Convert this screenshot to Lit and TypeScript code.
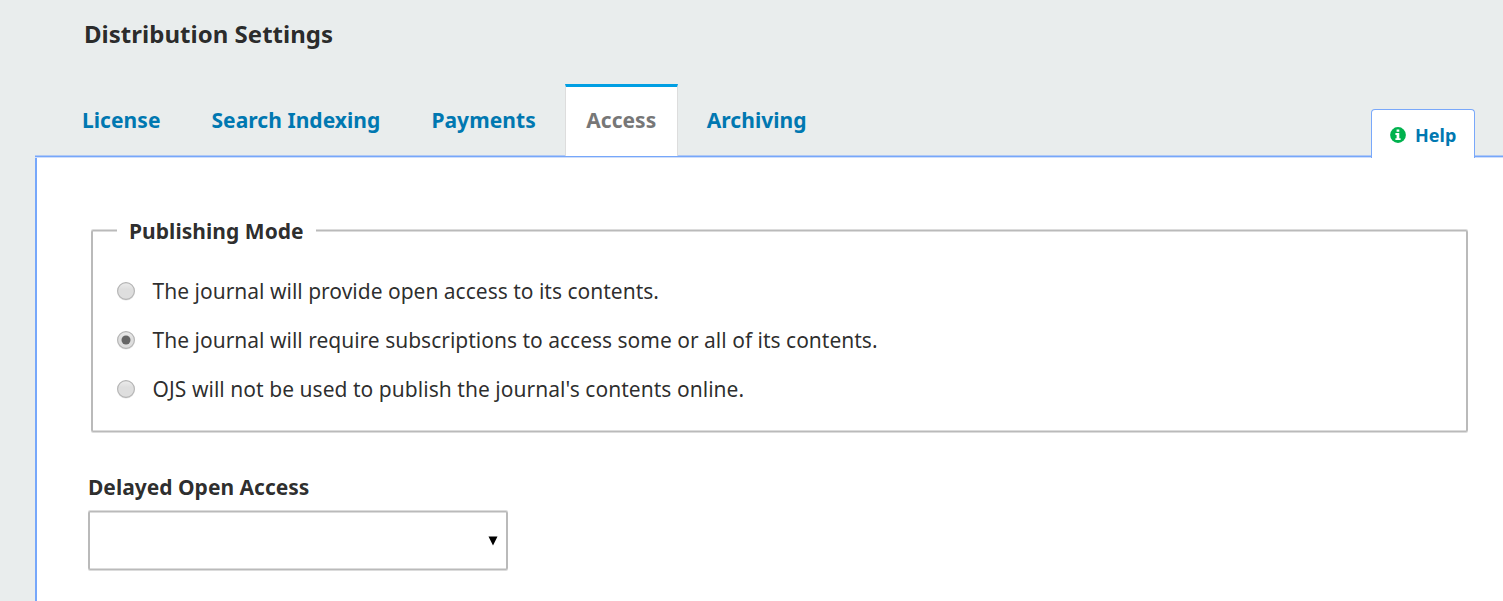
import { LitElement, html, css, svg } from "lit";
import { customElement, state } from "lit/decorators.js";
import { classMap } from "lit/directives/class-map.js";

@customElement("radio-option")
class RadioOption extends LitElement {
  static properties = { checked: { type: Boolean } };
  declare checked: boolean;
  static styles = css`
    :host { display: flex; align-items: center; height: 49px; cursor: pointer; }
    :host(:last-child) { letter-spacing: 0.04px; }
    .dot { flex: none; width: 20px; height: 20px; margin: 1px 16.6px 0 23px; }
    .text { font-size: 21px; line-height: 30px; color: rgba(0, 0, 0, 0.84); white-space: nowrap; }
  `;
  render() {
    return html`
      <svg class="dot" viewBox="0 0 20 20" role="radio" aria-checked=${this.checked ? "true" : "false"}>
        <defs>
          <linearGradient id="face" x1="0" y1="0" x2="0" y2="1">
            <stop offset="0" stop-color="#ececec" />
            <stop offset="0.4" stop-color="#dedede" />
            <stop offset="1" stop-color="#dedede" />
          </linearGradient>
        </defs>
        <circle cx="10" cy="10.6" r="9" fill="#000" opacity="0.1" />
        <circle cx="10" cy="10" r="8.4" fill="url(#face)" stroke="#b4b4b4" stroke-width="1.1" />
        ${this.checked ? svg`<circle cx="10" cy="10" r="4.5" fill="#666" />` : null}
      </svg>
      <span class="text"><slot></slot></span>
    `;
  }
}

@customElement("app-root")
class AppRoot extends LitElement {
  @state() private tab = "Access";
  @state() private mode = 1;

  private tabs = ["License", "Search Indexing", "Payments", "Access", "Archiving"];
  private modes = [
    "The journal will provide open access to its contents.",
    "The journal will require subscriptions to access some or all of its contents.",
    "OJS will not be used to publish the journal's contents online.",
  ];

  static styles = css`
    :host {
      display: flex;
      flex-direction: column;
      box-sizing: border-box;
      height: 601px;
      overflow: hidden;
      background: #e9eded;
      font-family: "Noto Sans", sans-serif;
      color: rgba(0, 0, 0, 0.84);
    }
    * { box-sizing: border-box; }
    h1 { margin: 0; padding: 16px 0 0 84px; height: 84px; font-size: 24px; line-height: 36px; font-weight: 700; letter-spacing: 0.02px; }
    .bar { display: flex; align-items: flex-end; height: 71px; padding: 0 28px 0 61px; }
    .tab { height: 71px; padding: 21px 21px 0; margin-right: 9px; font-size: 21px; line-height: 30px; font-weight: 700; letter-spacing: 0.05px; color: #0078b1; white-space: nowrap; }
    .tab.active { position: relative; width: 113px; height: 72px; margin: 0 8px -1px -1px; padding: 18px 0 0; text-align: center; background: #fff; color: #777; border: 1px solid #ddd; border-width: 3px 1px 0; border-top-color: #009fe3; }
    .help { position: relative; top: 3px; display: flex; align-items: center; gap: 9.5px; width: 104px; height: 49px; margin-left: auto; padding: 2px 0 0 17.5px; background: #fff; border: 1px solid #79a8fa; border-bottom: 0; border-radius: 4px 4px 0 0; font-size: 18px; font-weight: 700; color: #0078b1; }
    .info { width: 16px; height: 16px; }
    .panel { flex: 1; margin-left: 35px; background: #fff; border-left: 2px solid #76a7fa; }
    .edge { height: 3px; margin-left: -2px; background: linear-gradient(#b0c9f5 1px, #76a7fa 1px 2px, #cfdefa 2px); }
    .content { display: flex; flex-direction: column; }
    .group, .select {
      border: solid #bababa;
      border-width: 1px 2px;
      border-radius: 2px;
      box-shadow: 0 -1px #dcdcdc, 0 1px #dcdcdc, inset 0 1px #dcdcdc, inset 0 -1px #dcdcdc;
    }
    .group { margin: 72px 35px 0 54px; height: 202px; }
    .legend { width: max-content; margin: -15px 0 0 24px; padding: 0 12.5px 0 12px; height: 30px; font-size: 21px; line-height: 30px; font-weight: 700; letter-spacing: 0.04px; background: #fff; }
    .options { padding-top: 20px; }
    .label { margin: 40px 0 0 51px; font-size: 21px; line-height: 30px; font-weight: 700; }
    .select { display: flex; align-items: center; justify-content: flex-end; width: 420px; height: 59px; margin: 9px 0 0 51px; padding-right: 8px; }
    .arrow { width: 10px; height: 10px; }
  `;

  render() {
    return html`
      <h1>Distribution Settings</h1>
      <div class="bar">
        ${this.tabs.map(
          (t) => html`<div class=${classMap({ tab: true, active: t === this.tab })} @click=${() => (this.tab = t)}>${t}</div>`
        )}
        <div class="help">
          <svg class="info" viewBox="0 0 16 16">
            <circle cx="8" cy="8" r="7.9" fill="#00b24e" />
            <path fill="#fff" d="M6.6 2.5h2.7v2.2H6.6zM5.4 6h3.9v5.2h1.3v1.9H5.4v-1.9h1.2V7.9H5.4z" />
          </svg>
          <span>Help</span>
        </div>
      </div>
      <div class="panel">
        <div class="edge"></div>
        <div class="content">
          <div class="group">
            <div class="legend">Publishing Mode</div>
            <div class="options">
              ${this.modes.map(
                (m, i) => html`<radio-option ?checked=${i === this.mode} @click=${() => (this.mode = i)}>${m}</radio-option>`
              )}
            </div>
          </div>
          <div class="label">Delayed Open Access</div>
          <div class="select">
            <svg class="arrow" viewBox="0 0 10 10"><path d="M.5.5h9L5 9.5z" /></svg>
          </div>
        </div>
      </div>
    `;
  }
}
